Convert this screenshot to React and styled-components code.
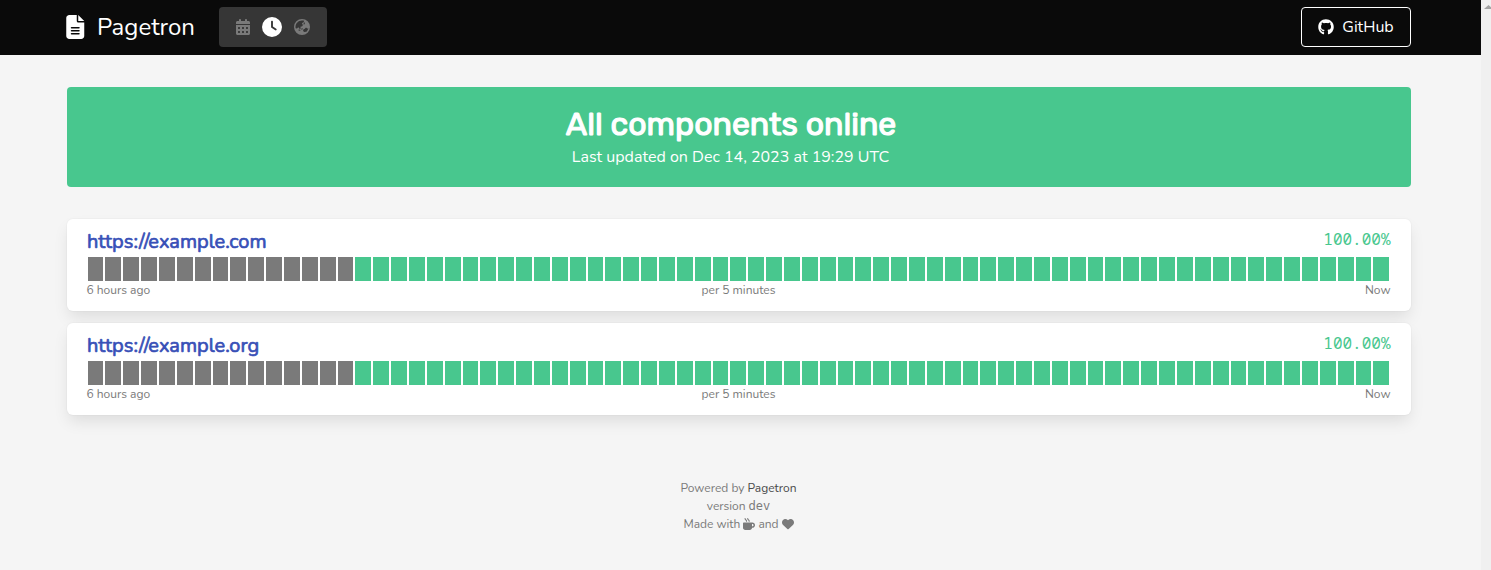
import React from "react";
import styled, { createGlobalStyle } from "styled-components";
import {
  FaFileLines,
  FaCalendarDays,
  FaClock,
  FaEarthAsia,
  FaGithub,
  FaMugHot,
  FaHeart,
} from "react-icons/fa6";

const GlobalStyle = createGlobalStyle`
  *, *::before, *::after { box-sizing: border-box; }
  body {
    margin: 0;
    overflow: hidden;
    background: #f5f5f5;
    font-family: Nunito, "Noto Sans", "Open Sans", sans-serif;
    font-size: 16px;
    color: #4a4a4a;
  }
  a { color: inherit; text-decoration: none; }
  svg { display: block; }
`;

const Viewport = styled.div`
  display: flex;
  height: 570px;
  overflow: hidden;
`;

const Page = styled.div`
  width: 1481px;
  flex: none;
`;

const Scrollbar = styled.div`
  flex: none;
  display: flex;
  justify-content: center;
  width: 15px;
  padding-top: 5px;
  background: #f0f0f0;
`;

const Navbar = styled.header`
  display: flex;
  align-items: center;
  height: 55px;
  padding: 0 70px 0 66px;
  background: #0a0a0a;
  color: #fff;
`;

const Brand = styled.a`
  display: flex;
  align-items: center;
  gap: 12.5px;
  width: 153px;
  white-space: nowrap;
`;

const BrandIcon = styled(FaFileLines)`
  width: 18.5px;
  height: 24px;
  margin-bottom: 1px;
`;

const BrandName = styled.span`
  margin-bottom: 1px;
  font-size: 24px;
  font-weight: 400;
  line-height: 36px;
`;

const RangeSwitch = styled.nav`
  display: flex;
  align-items: center;
  justify-content: space-between;
  width: 108px;
  height: 40px;
  margin-bottom: 1px;
  padding: 0 17px 0 16px;
  border-radius: 4px;
  background: #363636;
`;

const RangeItem = styled.a`
  display: flex;
  margin-right: ${(p) => (p.$active ? 1 : 0)}px;
  color: ${(p) => (p.$active ? "#fff" : "#7a7a7a")};
  font-size: ${(p) => (p.$active ? 20 : 16)}px;
`;

const GitHubButton = styled.a`
  display: flex;
  align-items: center;
  justify-content: center;
  gap: 8px;
  width: 110px;
  height: 40px;
  margin: 0 0 1px auto;
  border: 1px solid #fff;
  border-radius: 4px;
`;

const ButtonLabel = styled.span`
  font-size: 16px;
`;

const Container = styled.main`
  width: 1344px;
  margin: 32px 0 0 66.5px;
`;

const Banner = styled.section`
  display: flex;
  flex-direction: column;
  align-items: center;
  height: 100px;
  padding: 19px 40px 0 24px;
  border-radius: 4px;
  background: #48c78e;
  color: #fff;
  white-space: nowrap;
`;

const BannerTitle = styled.h1`
  margin: 0;
  padding-left: 1px;
  font-family: Rubik, Inter, sans-serif;
  font-size: 32px;
  font-weight: 400;
  line-height: 36px;
  -webkit-text-stroke: 1.2px currentColor;
`;

const BannerText = styled.p`
  margin: 3px 0 0;
  font-size: 16px;
  line-height: 24px;
`;

const CardList = styled.div`
  display: flex;
  flex-direction: column;
  gap: 12px;
  margin-top: 32px;
`;

const Card = styled.article`
  height: 92px;
  padding: 10px 20px;
  border-radius: 6px;
  background: #fff;
  box-shadow: 0 8px 16px -2px rgba(10, 10, 10, 0.1), 0 0 0 1px rgba(10, 10, 10, 0.02);
`;

const CardHead = styled.div`
  display: flex;
  justify-content: space-between;
  height: 27px;
`;

const SiteLink = styled.a`
  padding-left: 0.5px;
  font-size: 20px;
  font-weight: 400;
  line-height: 25px;
  color: #3850b7;
  -webkit-text-stroke: 0.7px currentColor;
`;

const Uptime = styled.span`
  font-family: "Noto Sans Mono", "Roboto Mono", "Liberation Mono", monospace;
  font-size: 16px;
  line-height: 20px;
  color: #48c78e;
`;

const Bars = styled.div`
  display: flex;
  height: 24px;
  margin-top: 1px;
`;

const Bar = styled.span`
  flex: 1;
  margin: 0 1px;
  background: ${(p) => (p.$online ? "#48c78e" : "#7a7a7a")};
`;

const Scale = styled.div`
  display: grid;
  grid-template-columns: 1fr auto 1fr;
  font-size: 12px;
  line-height: 18px;
  color: #7a7a7a;
`;

const ScaleLabel = styled.span`
  text-align: ${(p) => p.$align || "left"};
`;

const Footer = styled.footer`
  display: flex;
  flex-direction: column;
  align-items: center;
  margin-top: 64px;
  font-size: 12px;
  line-height: 18px;
  color: #7a7a7a;
`;

const FooterLine = styled.div`
  display: flex;
  align-items: center;
  gap: 3px;
  height: 18px;
`;

const FooterLink = styled.a`
  color: #4a4a4a;
`;

const Version = styled.span`
  font-family: "Noto Sans Mono", "Roboto Mono", "Liberation Mono", monospace;
  font-size: 12px;
`;

const BAR_COUNT = 73;
const UNKNOWN_COUNT = 15;
const sites = ["https://example.com", "https://example.org"];

function SiteCard({ url }) {
  return (
    <Card>
      <CardHead>
        <SiteLink href="#">{url}</SiteLink>
        <Uptime>100.00%</Uptime>
      </CardHead>
      <Bars>
        {Array.from({ length: BAR_COUNT }, (_, i) => (
          <Bar key={i} $online={i >= UNKNOWN_COUNT} />
        ))}
      </Bars>
      <Scale>
        <ScaleLabel>6 hours ago</ScaleLabel>
        <ScaleLabel>per 5 minutes</ScaleLabel>
        <ScaleLabel $align="right">Now</ScaleLabel>
      </Scale>
    </Card>
  );
}

export default function App() {
  return (
    <>
      <GlobalStyle />
      <Viewport>
        <Page>
          <Navbar>
            <Brand href="#">
              <BrandIcon />
              <BrandName>Pagetron</BrandName>
            </Brand>
            <RangeSwitch>
              <RangeItem href="#"><FaCalendarDays /></RangeItem>
              <RangeItem href="#" $active><FaClock /></RangeItem>
              <RangeItem href="#"><FaEarthAsia /></RangeItem>
            </RangeSwitch>
            <GitHubButton href="#">
              <FaGithub size={16} />
              <ButtonLabel>GitHub</ButtonLabel>
            </GitHubButton>
          </Navbar>
          <Container>
            <Banner>
              <BannerTitle>All components online</BannerTitle>
              <BannerText>Last updated on Dec 14, 2023 at 19:29 UTC</BannerText>
            </Banner>
            <CardList>
              {sites.map((url) => (
                <SiteCard key={url} url={url} />
              ))}
            </CardList>
            <Footer>
              <FooterLine>Powered by <FooterLink href="#">Pagetron</FooterLink></FooterLine>
              <FooterLine>version <Version>dev</Version></FooterLine>
              <FooterLine>Made with <FaMugHot /> and <FaHeart /></FooterLine>
            </Footer>
          </Container>
        </Page>
        <Scrollbar>
          <svg width="9" height="4" viewBox="0 0 9 4">
            <path d="M4.5 0L9 4H0z" fill="#a3a3a3" />
          </svg>
        </Scrollbar>
      </Viewport>
    </>
  );
}
